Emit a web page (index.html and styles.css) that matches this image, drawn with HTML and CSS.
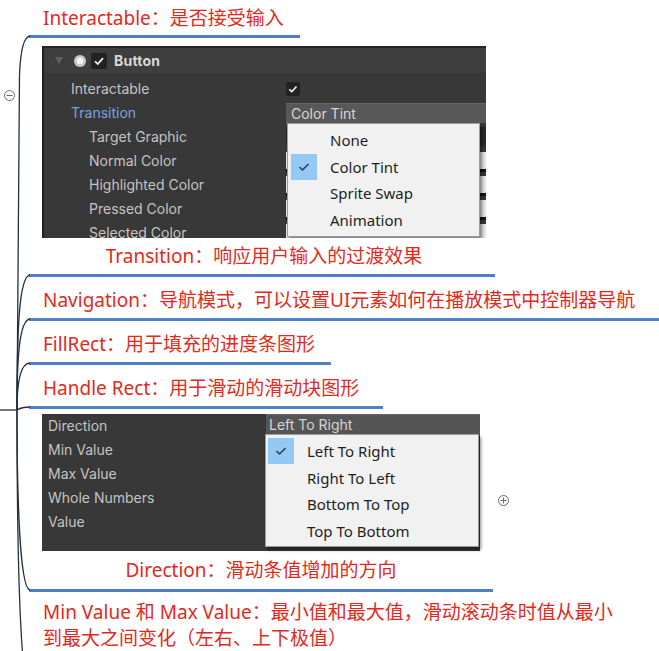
FILE: index.html
```html
<!DOCTYPE html>
<html lang="zh-CN">
<head>
<meta charset="utf-8">
<title>Slider / Button 属性</title>
<link rel="stylesheet" href="styles.css">
</head>
<body>
<div class="map">
  <svg class="links" width="659" height="651" viewBox="0 0 659 651">
    <g fill="none" stroke="#26313c" stroke-width="1.3">
      <path d="M0 410 L17 410"/>
      <path d="M17 410 L19.5 75 Q21 37 30 36"/>
      <path d="M17 410 C17 330, 19 276, 30 275"/>
      <path d="M17 410 C17 360, 19 320, 30 319"/>
      <path d="M17 410 C17 385, 20 363, 30 363"/>
      <path d="M17 410 C20 408, 24 407, 30 407"/>
      <path d="M17 410 C17 500, 20 589, 30 590"/>
      <path d="M17 410 C17 560, 20 680, 30 700"/>
    </g>
    <g fill="none" stroke="#6b6b6b" stroke-width="1">
      <circle cx="9.5" cy="95.5" r="5"/>
      <path d="M6.5 95.5 H12.5"/>
      <circle cx="503.5" cy="500.5" r="5"/>
      <path d="M500.5 500.5 H506.5 M503.5 497.5 V503.5"/>
    </g>
  </svg>

  <div class="topic t-first"><span class="label">Interactable：是否接受输入</span></div>

  <div class="topic img-topic t-button">
    <div class="panel p1">
      <div class="head">
        <span class="tri"></span>
        <span class="radio"></span>
        <span class="chk"><svg width="16" height="16" viewBox="0 0 16 16"><path d="M4 8.3 L6.8 11 L12 5.2" fill="none" stroke="#f2f2f2" stroke-width="1.8"/></svg></span>
        <span class="title">Button</span>
      </div>
      <div class="rows">
        <div class="row"><span class="name">Interactable</span><span class="val"><span class="chk small"><svg width="14" height="14" viewBox="0 0 14 14"><path d="M3.3 7.3 L5.8 9.6 L10.5 4.5" fill="none" stroke="#f2f2f2" stroke-width="1.6"/></svg></span></span></div>
        <div class="row"><span class="name blue">Transition</span><span class="val"><span class="field">Color Tint</span></span></div>
        <div class="row sub"><span class="name">Target Graphic</span><span class="val"><span class="obj"></span></span></div>
        <div class="row sub"><span class="name">Normal Color</span><span class="val"><span class="color"></span></span></div>
        <div class="row sub"><span class="name">Highlighted Color</span><span class="val"><span class="color"></span></span></div>
        <div class="row sub"><span class="name">Pressed Color</span><span class="val"><span class="color"></span></span></div>
        <div class="row sub"><span class="name">Selected Color</span><span class="val"><span class="color"></span></span></div>
      </div>
      <div class="menu m1">
        <div class="item"><span class="tick"></span>None</div>
        <div class="item"><span class="tick on"><svg width="14" height="14" viewBox="0 0 14 14"><path d="M2.5 7 L5.5 10 L11.5 4" fill="none" stroke="#2b3a4a" stroke-width="1.5"/></svg></span>Color Tint</div>
        <div class="item"><span class="tick"></span>Sprite Swap</div>
        <div class="item"><span class="tick"></span>Animation</div>
      </div>
    </div>
    <div class="label">Transition：响应用户输入的过渡效果</div>
  </div>

  <div class="topic t-nav"><span class="label">Navigation：导航模式，可以设置UI元素如何在播放模式中控制器导航</span></div>
  <div class="topic"><span class="label">FillRect：用于填充的进度条图形</span></div>
  <div class="topic t-handle"><span class="label">Handle Rect：用于滑动的滑动块图形</span></div>

  <div class="topic img-topic t-dir">
    <div class="panel p2">
      <div class="rows">
        <div class="row"><span class="name">Direction</span><span class="val"><span class="field">Left To Right</span></span></div>
        <div class="row"><span class="name">Min Value</span><span class="val"></span></div>
        <div class="row"><span class="name">Max Value</span><span class="val"></span></div>
        <div class="row"><span class="name">Whole Numbers</span><span class="val"></span></div>
        <div class="row"><span class="name">Value</span><span class="val"></span></div>
      </div>
      <div class="menu m2">
        <div class="item"><span class="tick on"><svg width="14" height="14" viewBox="0 0 14 14"><path d="M2.5 7 L5.5 10 L11.5 4" fill="none" stroke="#2b3a4a" stroke-width="1.5"/></svg></span>Left To Right</div>
        <div class="item"><span class="tick"></span>Right To Left</div>
        <div class="item"><span class="tick"></span>Bottom To Top</div>
        <div class="item"><span class="tick"></span>Top To Bottom</div>
      </div>
    </div>
    <div class="label">Direction：滑动条值增加的方向</div>
  </div>

  <div class="topic t-minmax"><span class="label">Min Value 和 Max Value：最小值和最大值，滑动滚动条时值从最小<br>到最大之间变化（左右、上下极值）</span></div>
</div>
</body>
</html>
```

FILE: styles.css
```css
html, body {
  margin: 0;
  padding: 0;
  background: #ffffff;
}

body {
  width: 659px;
  height: 651px;
  overflow: hidden;
}

.map {
  position: relative;
  width: 659px;
  height: 651px;
  font-family: "Noto Sans", "Noto Sans CJK SC", sans-serif;
}

.links {
  position: absolute;
  left: 0;
  top: 0;
  pointer-events: none;
}

.topic {
  width: fit-content;
  margin-left: 29px;
  padding: 10px 16px 5px 14px;
  border-bottom: 3px solid #4f80c6;
  color: #e2291c;
  font-size: 19px;
  line-height: 26px;
  white-space: nowrap;
}

.t-first {
  padding-top: 5px;
  padding-bottom: 4px;
}

.t-nav {
  padding-right: 40px;
}

.t-handle {
  padding-right: 24px;
}

.img-topic {
  padding: 8px 9px 5px 13px;
  text-align: center;
}

.img-topic .label {
  display: block;
  margin-top: 5px;
}

.t-dir {
  padding: 5px 13px 6px 13px;
}

.t-dir .label {
  margin-top: 6px;
}

.t-minmax {
  padding-top: 7px;
  border-bottom: none;
}

/* Unity inspector panels */
.panel {
  position: relative;
  overflow: visible;
  background: #383838;
  font-family: Inter, "Liberation Sans", sans-serif;
  font-size: 14px;
  color: #c4c4c4;
  text-align: left;
  line-height: 24px;
}

.p1 {
  width: 442px;
  height: 190px;
  border-left: 2px solid #202020;
  border-top: 2px solid #242424;
  overflow: hidden;
}

.p2 {
  width: 438px;
  height: 137px;
}

.head {
  display: flex;
  align-items: center;
  height: 25px;
  background: #3e3e3e;
  padding-left: 11px;
}

.tri {
  width: 0;
  height: 0;
  border-left: 4px solid transparent;
  border-right: 4px solid transparent;
  border-top: 7px solid #606060;
  margin-right: 11px;
}

.radio {
  width: 12px;
  height: 12px;
  border-radius: 50%;
  background: radial-gradient(circle, #f4f4f4 0 3px, #bdbdbd 4px, #d8d8d8 6px);
  margin-right: 5px;
}

.chk {
  display: inline-flex;
  align-items: center;
  justify-content: center;
  width: 16px;
  height: 16px;
  background: #222222;
  border-radius: 2px;
}

.chk.small {
  width: 14px;
  height: 14px;
  margin-top: 5px;
}

.title {
  margin-left: 7px;
  font-weight: 700;
  color: #d8d8d8;
  letter-spacing: 0.2px;
}

.rows {
  padding-top: 4px;
}

.p2 .rows {
  padding-top: 0;
}

.row {
  display: grid;
  grid-template-columns: 242px 1fr;
  height: 24px;
}

.p2 .row {
  grid-template-columns: 224px 1fr;
}

.name {
  padding-left: 27px;
  white-space: nowrap;
}

.p2 .name {
  padding-left: 6px;
}

.row.sub .name {
  padding-left: 45px;
}

.name.blue {
  color: #7aa3e2;
}

.val {
  display: block;
}

.field {
  display: block;
  height: 19px;
  margin-top: 2px;
  padding-left: 5px;
  background: #585858;
  border-top: 1px solid #666;
  color: #d6d6d6;
  line-height: 19px;
}

.p2 .field {
  margin-top: 0;
  padding-left: 3px;
  background: #555555;
}

.obj {
  display: block;
  height: 19px;
  margin-top: 2px;
  background: #2a2a2a;
}

.color {
  display: block;
  height: 17px;
  margin-top: 3px;
  background: #e6e6e6;
  border-bottom: 3px solid #111;
}

/* Dropdown menus */
.menu {
  position: absolute;
  background: #f1f1f1;
  border: 1px solid #9c9c9c;
  box-shadow: 2px 3px 3px rgba(0, 0, 0, 0.45);
  box-sizing: border-box;
  padding-top: 3px;
  font-family: "Noto Sans", "Liberation Sans", sans-serif;
  font-size: 15px;
  color: #1e1e1e;
}

.m1 {
  left: 243px;
  top: 75px;
  width: 193px;
  height: 114px;
}

.m2 {
  left: 223px;
  top: 20px;
  width: 214px;
  height: 113px;
}

.item {
  display: flex;
  align-items: center;
  height: 26.6px;
  line-height: 26px;
  white-space: nowrap;
}

.tick {
  display: inline-flex;
  align-items: center;
  justify-content: center;
  width: 26px;
  height: 26px;
  margin-left: 3px;
  margin-right: 13px;
}

.m2 .tick {
  margin-left: 2px;
  margin-right: 13px;
}

.tick.on {
  background: #94c9f6;
}
```
